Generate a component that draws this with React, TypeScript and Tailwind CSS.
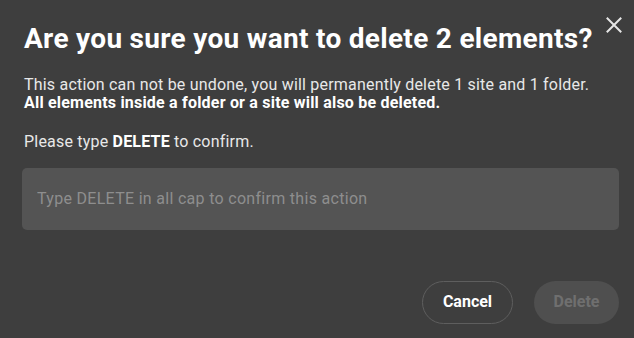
import React from 'react'

const CloseIcon = () => (
    <svg width="16" height="16" viewBox="0 0 16 16" fill="none" stroke="#e6e6e6" strokeWidth="2" strokeLinecap="square">
        <path d="M1.5 1.5 L14.5 14.5 M14.5 1.5 L1.5 14.5" />
    </svg>
)

export default function App() {
    return (
        <div className="relative w-full h-[338px] overflow-hidden bg-[#3e3e3e] font-['Roboto',sans-serif] text-white">
            <button className="absolute top-[17px] right-[12px] p-0">
                <CloseIcon />
            </button>

            <div className="flex flex-col pl-[24px] pr-[15px] pt-[24px]">
                <h1 className="text-[28px] leading-[30px] font-bold tracking-[0.3px] whitespace-nowrap">Are you sure you want to delete 2 elements?</h1>

                <p className="mt-[22px] text-[16px] leading-[17.5px] tracking-[0.2px] text-[#e8e8e8] whitespace-nowrap">
                    This action can not be undone, you will permanently delete 1 site and 1 folder.
                    <br />
                    <span className="font-bold text-white">All elements inside a folder or a site will also be deleted.</span>
                </p>

                <p className="mt-[22px] text-[16px] leading-[17.5px] tracking-[0.2px] text-[#e8e8e8]">
                    Please type <span className="font-bold text-white">DELETE</span> to confirm.
                </p>

                <input
                    className="mt-[17px] -ml-[2px] h-[62px] rounded-[5px] bg-[#545454] px-[15px] text-[16px] tracking-[0.3px] text-white outline-none placeholder:text-[#8e8e8e]"
                    placeholder="Type DELETE in all cap to confirm this action"
                />

                <div className="mt-[51px] flex justify-end gap-[21px]">
                    <button className="h-[43px] w-[91px] rounded-full border border-[#5e5e5e] text-[16px] font-bold text-white">Cancel</button>
                    <button className="h-[43px] w-[85px] rounded-full bg-[#4f4f4f] text-[16px] font-bold text-[#6f6f6f]">Delete</button>
                </div>
            </div>
        </div>
    )
}
